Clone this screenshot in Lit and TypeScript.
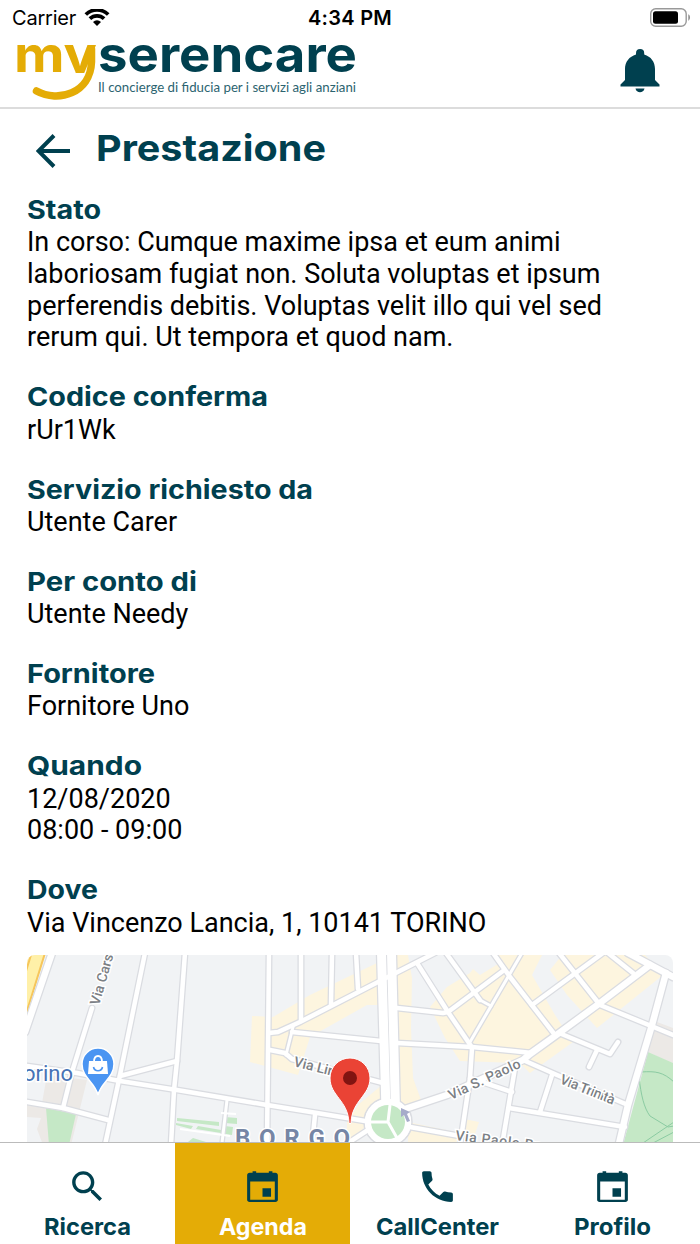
import { css, html, LitElement, svg } from "lit";
import { customElement, property } from "lit/decorators.js";

type IconName = "search" | "calendar" | "phone";

interface Detail {
    title: string;
    width: number;
    lines: string[];
}

interface Tab {
    label: string;
    width: number;
    icon: IconName;
    active?: boolean;
}

const DETAILS: Detail[] = [
    {
        title: "Stato",
        width: 74,
        lines: [
            "In corso: Cumque maxime ipsa et eum animi",
            "laboriosam fugiat non. Soluta voluptas et ipsum",
            "perferendis debitis. Voluptas velit illo qui vel sed",
            "rerum qui. Ut tempora et quod nam.",
        ],
    },
    { title: "Codice conferma", width: 241, lines: ["rUr1Wk"] },
    { title: "Servizio richiesto da", width: 286, lines: ["Utente Carer"] },
    { title: "Per conto di", width: 170, lines: ["Utente Needy"] },
    { title: "Fornitore", width: 128, lines: ["Fornitore Uno"] },
    { title: "Quando", width: 115, lines: ["12/08/2020", "08:00 - 09:00"] },
    { title: "Dove", width: 71, lines: ["Via Vincenzo Lancia, 1, 10141 TORINO"] },
];

const TABS: Tab[] = [
    { label: "Ricerca", width: 87, icon: "search" },
    { label: "Agenda", width: 88, icon: "calendar", active: true },
    { label: "CallCenter", width: 123, icon: "phone" },
    { label: "Profilo", width: 77, icon: "calendar" },
];

const ICONS: Record<IconName, string> = {
    search: "M15.5 14h-.79l-.28-.27C15.41 12.59 16 11.11 16 9.5 16 5.91 13.09 3 9.5 3S3 5.91 3 9.5 5.91 16 9.5 16c1.61 0 3.09-.59 4.23-1.57l.27.28v.79l5 4.99L20.49 19l-4.99-5zm-6 0C7.01 14 5 11.99 5 9.5S7.01 5 9.5 5 14 7.01 14 9.5 11.99 14 9.5 14z",
    calendar: "M19.5 4h-1.7V3h-2.1v1H8.3V3H6.2v1H4.5C3.6 4 3 4.7 3 5.5v14.2c0 .8.6 1.3 1.4 1.3h15.2c.8 0 1.4-.5 1.4-1.3V5.5c0-.8-.6-1.5-1.5-1.5zM19.2 19.7H4.8V9h14.4v10.7zM12 13h5v5h-5z",
    phone: "M6.62 10.79c1.44 2.83 3.76 5.14 6.59 6.59l2.2-2.2c.27-.27.67-.36 1.02-.24 1.12.37 2.33.57 3.57.57.55 0 1 .45 1 1V20c0 .55-.45 1-1 1C10.61 21 3 13.39 3 4c0-.55.45-1 1-1h3.5c.55 0 1 .45 1 1 0 1.25.2 2.45.57 3.57.11.35.03.74-.25 1.02l-2.2 2.2z",
};

@customElement("fitted-text")
export class FittedText extends LitElement {
    static styles = css`
        :host {
            display: block;
        }

        svg {
            display: block;
            overflow: visible;
            height: 1.2em;
        }

        text {
            font: inherit;
            fill: currentColor;
        }
    `;

    @property()
    text = "";

    @property({ type: Number })
    width = 100;

    render() {
        return html`<svg width=${this.width}>
            <text x="0" y="0.95em" textLength=${this.width} lengthAdjust="spacingAndGlyphs">${this.text}</text>
        </svg>`;
    }
}

@customElement("status-bar")
export class StatusBar extends LitElement {
    static styles = css`
        :host {
            display: grid;
            grid-template-columns: 1fr auto 1fr;
            align-items: center;
            height: 36px;
            padding: 0 12px;
            color: #000;
            font: 400 20px/24px "Inter", sans-serif;
        }

        .carrier {
            display: flex;
            align-items: center;
            gap: 8px;
            letter-spacing: -0.2px;
        }

        .time {
            font-weight: 600;
            letter-spacing: 0.3px;
        }

        .battery {
            justify-self: end;
            margin-right: -3px;
        }

        svg {
            display: block;
        }
    `;

    render() {
        return html`
            <div class="carrier">
                <span>Carrier</span>
                <svg width="26" height="19" viewBox="0 0 26 19">
                    <path fill="none" stroke="#000" stroke-width="3.7" d="M1.8 5.500a16 16 0 0 1 22.400 0M5.900 9.700a10.200 10.200 0 0 1 14.200 0" />
                    <path d="M13 17l-4-4.100a5.800 5.800 0 0 1 8 0z" />
                </svg>
            </div>
            <div class="time">4:34 PM</div>
            <svg class="battery" width="42" height="20" viewBox="0 0 42 20">
                <rect x="1.7" y="0.7" width="35.5" height="17.6" rx="5" fill="none" stroke="#999" stroke-width="1.4" />
                <rect x="4" y="3.3" width="25" height="12.4" rx="2.5" />
                <path d="M39.3 6.300c2.200 1 2.200 5.400 0 6.400z" fill="#888" />
            </svg>
        `;
    }
}

@customElement("brand-header")
export class BrandHeader extends LitElement {
    static styles = css`
        :host {
            display: flex;
            justify-content: space-between;
            height: 73px;
            padding: 0 40px 0 0;
            border-bottom: 2px solid #dcdcdc;
            box-sizing: border-box;
            color: #00404f;
        }

        svg {
            display: block;
        }

        .logo {
            font-family: "Inter", sans-serif;
            font-weight: 700;
            overflow: visible;
        }

        .my {
            font-size: 50px;
            fill: #e4ac06;
        }

        .name {
            font-size: 50px;
            fill: #00404f;
        }

        .claim {
            font-family: "Lato", sans-serif;
            font-size: 12.5px;
            font-weight: 400;
            fill: #2c6470;
        }

        .bell {
            margin-top: 12px;
        }
    `;

    render() {
        return html`
            <svg class="logo" width="370" height="70" viewBox="0 36 370 70">
                <clipPath id="above-smile"><rect x="0" y="36" width="100" height="37" /></clipPath>
                <text class="my" x="14" y="72" textLength="83" lengthAdjust="spacingAndGlyphs" clip-path="url(#above-smile)">my</text>
                <path d="M91.5 49v13c-1 31-33 41-55 29" fill="none" stroke="#e4ac06" stroke-width="7.5" stroke-linecap="round" />
                <text class="name" x="98" y="72" textLength="259" lengthAdjust="spacingAndGlyphs">serencare</text>
                <text class="claim" x="98" y="92" textLength="258" lengthAdjust="spacingAndGlyphs">Il concierge di fiducia per i servizi agli anziani</text>
            </svg>
            <svg class="bell" width="40" height="46" viewBox="0 0 40 46" fill="currentColor">
                <path d="M16 6.500V5.200a4 4 0 0 1 8.200 0v1.300C31 8.500 35 14 35 21v11l4.500 4.500v2H.5v-2L5 32V21C5 14 9.200 8.500 16 6.500zM15.500 40.500h9c-.8 5-8.200 5-9 0z" />
            </svg>
        `;
    }
}

// Roads, grouped by stroke width.
const ROADS: [number, string[]][] = [
    [3, [
        "M522 953L470 1042",
        "M480 1000L491 1006",
        "M293 1027L286 1055",
        "M227 1100L222 1143",
    ]],
    [4.5, [
        "M92 1008L72 1072L63 1108",
        "M120 1076L177 1061",
        "M27 1102L63 1108L108 1120",
        "M27 1066L77 1073L120 1081L177 1090L267 1105L317 1113L365 1121",
        "M145 953L120 1075L105 1145",
        "M185 953L177 1061L174 1090L171 1145",
        "M269 953L267 1145",
        "M301 953V1021",
        "M332 953L331 1005",
        "M356 953L358 989",
        "M269 1033L278 1032L300 1022L380 981L435 953",
        "M292 1032L381 1041",
        "M270 1050L285 1053L292 1059L383 1083",
        "M315 1115L312 1145",
        "M345 1145L368 1130",
        "M397 1008L443 1013L448 1012L503 971",
        "M417 963L448 1012L471 1046",
        "M446 953L480 1000",
        "M397 1043L472 1047L532 1053",
        "M493 953L510 977L555 1035",
        "M532 1005L603 953",
        "M559 953L600 1005L673 1035",
        "M608 953L633 973",
        "M559 1033L610 1054L618 1042",
        "M597 1050L589 1067",
        "M523 1060L557 1075L628 1105",
        "M552 1075L540 1112",
        "M509 1108L625 1127",
        "M515 1068L502 1145",
        "M472 1048L470 1078L460 1145",
        "M470 1078L512 1092",
        "M410 1127L460 1136",
    ]],
    [6.5, [
        "M52 953L25 1032",
        "M650 965L600 1003L555 1036L530 1054L523 1060L447 1095L405 1109",
        "M628 953L673 977",
        "M666 973L652 1025L628 1105L618 1148",
    ]],
    [9, ["M381.5 953L386 1110", "M391.5 953L395.5 1110"]],
];

@customElement("place-map")
export class PlaceMap extends LitElement {
    static styles = css`
        :host {
            display: block;
            border-radius: 8px 8px 0 0;
            overflow: hidden;
        }

        svg {
            display: block;
            font-family: "Roboto", sans-serif;
        }

        .land {
            fill: #f1f3f5;
        }

        .built {
            fill: #fdf5df;
        }

        .paved {
            fill: #ece9e6;
        }

        .park {
            fill: #c5e8c6;
        }

        .casing {
            fill: none;
            stroke: #dadce1;
            stroke-linecap: round;
            stroke-linejoin: round;
        }

        .road {
            fill: none;
            stroke: #fff;
            stroke-linecap: round;
            stroke-linejoin: round;
        }

        .trail {
            fill: none;
            stroke: #8bcba2;
        }

        .label {
            fill: #7b8085;
            stroke: #fff;
            stroke-width: 3px;
            paint-order: stroke;
            font-size: 14px;
            font-weight: 500;
        }

        .poi {
            fill: #4873b5;
            font-size: 22px;
            font-weight: 400;
        }

        .district {
            fill: #7686a5;
            font-size: 24px;
            font-weight: 700;
        }
    `;

    render() {
        return html`
            <svg width="646" height="188" viewBox="27 955 646 188">
                <rect class="land" x="27" y="955" width="646" height="188" />
                <path class="paved" d="M47 1075l40 5-16 65H27v-45l15 3zM657 1022l16 6v36l-25-12z" />
                <path class="land" d="M27 1117l14 1-4 11 6 16H27z" />
                <path d="M27 955h18l-18 58z" fill="#fff0a8" />
                <path d="M45 953l-19 61M31 955l-5 16" stroke="#f6c65c" stroke-width="2" />
                <path class="built" d="M252 1016l21 1 37-22 67-32 2 42h-12l-57 32-12 38-48-13z" />
                <path class="built" d="M394 955h14l4 23-1 50 2 50 8 22-12 9-11-5zM382 1085v20l-28 35h-7v-18l12-18zM408 1122l52 11v12h-52z" />
                <path class="built" d="M430 1007l17-20 23-14 3-4 7 6 23-14-5-6h44l-10 20 23 40 18 27-43 31-10-10-60-2-15-23zM562 955l-12 15 17 25 30 33 66-53-18-20zM464 1119l15 3-4 12-14-2z" />
                <path class="park" d="M46 1108l30 6-7 31H49zM648 1052l25 11v82h-50z" />
                <path class="park" d="M177 1118l42 4v4l-42-5zM176 1123l17 3-2 3-15-4zM198 1126l23 4v3l-25-4zM225 1117l12 1v6l-12-1zM225 1126l8 1-1 8-8-1zM188 1142l5-4 13 4v3h-20z" />
                <path class="trail" d="M641 1072c15-1 22 0 33 10M639 1077c2 18 5 31 11 39l18 11 6-1M643 1143l31-21M653 1143l21-11" />
                ${ROADS.map(([width, paths]) => paths.map((d) => svg`<path class="casing" stroke-width=${width + 2.5} d=${d} />`))}
                <circle cx="388" cy="1122" r="24" fill="#fff" stroke="#dadce1" stroke-width="1.5" />
                ${ROADS.map(([width, paths]) => paths.map((d) => svg`<path class="road" stroke-width=${width} d=${d} />`))}
                <circle cx="388" cy="1122" r="23" fill="#fff" />
                <circle class="park" cx="388" cy="1122" r="17" />
                <path class="road" stroke-width="3" d="M371 1122h17l2-17M388 1122l9 16" />
                <path d="M401 1108l9 4-3 2 3 7-3 1-3-7-3 2z" fill="#a6acca" />
                <path d="M180 1129l50 7M221 1113l15 1" stroke="#fff" stroke-width="2" />
                <text class="label" transform="translate(99 1006) rotate(-74)">Via Carso</text>
                <text class="label" transform="translate(293 1066) rotate(14)">Via Lineo</text>
                <text class="label" transform="translate(451 1100) rotate(-25)" textLength="78">Via S. Paolo</text>
                <text class="label" transform="translate(559 1083) rotate(22)" textLength="58">Via Trinità</text>
                <text class="label" transform="translate(455 1140) rotate(7)" textLength="84">Via Paolo Br</text>
                <text class="label poi" x="23" y="1081" textLength="50" lengthAdjust="spacingAndGlyphs">orino</text>
                <text class="label district" x="235" y="1146" textLength="115">BORGO</text>
                <path d="M98 1095c-3-13-16-17-16-31a16 16 0 0 1 32 0c0 14-13 18-16 31z" fill="#4b95f2" stroke="#fff" stroke-width="1.5" />
                <path d="M89 1061h18l1 13H88z" fill="#fff" />
                <path d="M94 1062c0-8 8-8 8 0" fill="none" stroke="#fff" stroke-width="1.8" />
                <path d="M93.5 1067c1 5 8 5 9 0" fill="none" stroke="#4b95f2" stroke-width="1.6" />
                <path d="M349 1123c-1-23-19-27-19-45a20 20 0 0 1 40 0c0 18-18 22-19 45q-1 2-2 0z" fill="#ea4335" stroke="#fff" stroke-width="1" />
                <circle cx="350" cy="1078" r="7" fill="#811411" />
            </svg>
        `;
    }
}

@customElement("tab-bar")
export class TabBar extends LitElement {
    static styles = css`
        :host {
            display: grid;
            grid-template-columns: repeat(4, 1fr);
            height: 102px;
            box-sizing: border-box;
            border-top: 1px solid #bbb;
            background: #fff;
            color: #00404f;
        }

        .tab {
            display: flex;
            flex-direction: column;
            align-items: center;
            padding-top: 23px;
            font: 700 23.5px "Inter", sans-serif;
        }

        .active {
            background: #e4ac06;
        }

        .active fitted-text {
            color: #fff;
        }

        .icon {
            display: block;
            width: 41px;
            height: 41px;
            margin-bottom: 6px;
        }
    `;

    render() {
        return html`${TABS.map(
            (tab) => html`
                <div class="tab ${tab.active ? "active" : ""}">
                    <svg class="icon" viewBox="0 0 24 24" fill="currentColor" fill-rule="evenodd"><path d=${ICONS[tab.icon]} /></svg>
                    <fitted-text .text=${tab.label} .width=${tab.width}></fitted-text>
                </div>
            `,
        )}`;
    }
}

@customElement("app-root")
export class AppRoot extends LitElement {
    static styles = css`
        :host {
            display: flex;
            flex-direction: column;
            height: 1244px;
            background: #fff;
            overflow: hidden;
        }

        .content {
            flex: 1;
            min-height: 0;
            overflow: hidden;
            padding: 0 27px;
        }

        .title {
            display: flex;
            align-items: center;
            gap: 26px;
            height: 84px;
            margin-bottom: 1px;
            padding-left: 9px;
            color: #00404f;
            font: 700 36px "Inter", sans-serif;
        }

        .title fitted-text {
            margin-bottom: 4px;
        }

        .detail {
            margin-bottom: 27.3px;
            color: #000;
            font: 400 27px/31.75px "Roboto", sans-serif;
        }

        .detail:last-of-type {
            margin-bottom: 15.7px;
        }

        .heading {
            height: 33.2px;
            color: #00404f;
            font: 700 26px "Inter", sans-serif;
        }

        .line {
            white-space: nowrap;
        }
    `;

    render() {
        return html`
            <status-bar></status-bar>
            <brand-header></brand-header>
            <div class="content">
                <div class="title">
                    <svg width="34" height="34" viewBox="0 0 34 34" fill="none" stroke="currentColor" stroke-width="4">
                        <path d="M34 17H3M18 1.500L2.500 17L18 32.500" />
                    </svg>
                    <fitted-text .text=${"Prestazione"} .width=${230}></fitted-text>
                </div>
                ${DETAILS.map(
                    (detail) => html`
                        <section class="detail">
                            <fitted-text class="heading" .text=${detail.title} .width=${detail.width}></fitted-text>
                            ${detail.lines.map((line) => html`<div class="line">${line}</div>`)}
                        </section>
                    `,
                )}
                <place-map></place-map>
            </div>
            <tab-bar></tab-bar>
        `;
    }
}
